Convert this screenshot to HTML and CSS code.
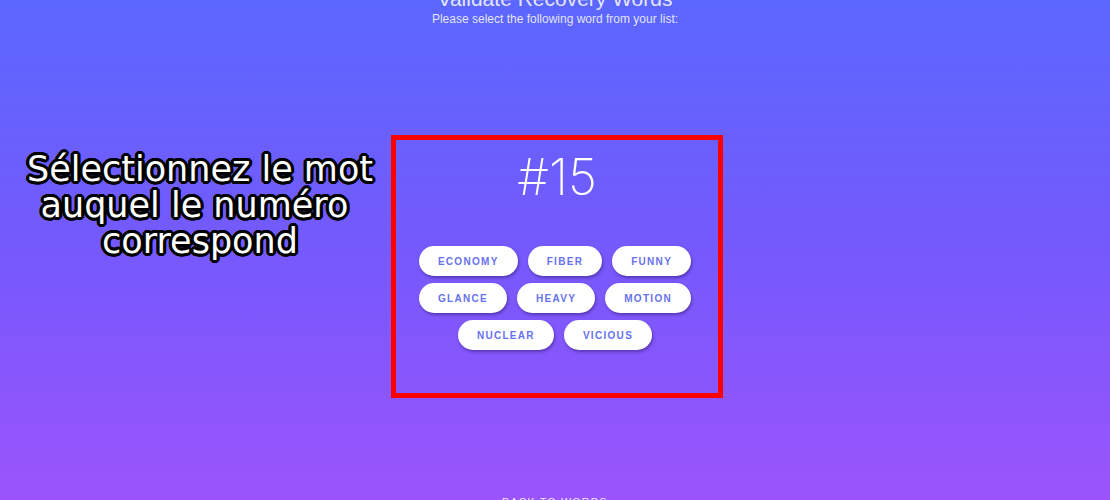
FILE: index.html
```html
<!DOCTYPE html>
<html lang="en">
<head>
<meta charset="utf-8">
<title>Validate Recovery Words</title>
<link rel="stylesheet" href="styles.css">
</head>
<body>
<div class="page">
  <header class="head">
    <h1 class="title">Validate Recovery Words</h1>
    <p class="subtitle">Please select the following word from your list:</p>
  </header>
  <main class="stage">
    <p class="caption">Sélectionnez le mot<br>auquel le numéro&nbsp;<br>correspond</p>
    <section class="card">
      <div class="number">#15</div>
      <div class="words">
        <button class="word">ECONOMY</button>
        <button class="word">FIBER</button>
        <button class="word">FUNNY</button>
        <button class="word">GLANCE</button>
        <button class="word">HEAVY</button>
        <button class="word">MOTION</button>
        <button class="word">NUCLEAR</button>
        <button class="word">VICIOUS</button>
      </div>
    </section>
  </main>
  <footer class="foot">
    <a class="back">BACK TO WORDS</a>
  </footer>
</div>
</body>
</html>
```
FILE: styles.css
```css
html, body {
  margin: 0;
  padding: 0;
}
body {
  width: 1110px;
  height: 500px;
  overflow: hidden;
  background: linear-gradient(180deg, #5b67fe 0%, #7559fd 50%, #9b54fb 100%);
  font-family: "Liberation Sans", Arial, sans-serif;
  color: #fff;
}
.page {
  position: relative;
  height: 500px;
  display: flex;
  flex-direction: column;
  align-items: center;
}
.head {
  display: flex;
  flex-direction: column;
  align-items: center;
  margin-top: -14px;
}
.title {
  margin: 0;
  font-family: "Liberation Sans", Arial, sans-serif;
  font-weight: 300;
  font-size: 21px;
  line-height: 26px;
  color: rgba(255,255,255,0.85);
}
.subtitle {
  margin: 0;
  font-size: 12px;
  line-height: 15px;
  color: rgba(255,255,255,0.85);
}
.stage {
  width: 100%;
  box-sizing: border-box;
  padding-left: 4px;
  display: flex;
  justify-content: center;
  margin-top: 108px;
}
.caption {
  position: absolute;
  left: 0;
  top: 151px;
  width: 400px;
  margin: 0;
  text-align: center;
  font-family: "DejaVu Sans", Verdana, sans-serif;
  font-size: 35px;
  line-height: 36px;
  color: #fff;
  text-shadow:
    -3px 0 0 #000, 3px 0 0 #000, 0 -3px 0 #000, 0 3px 0 #000,
    -2px -2px 0 #000, 2px -2px 0 #000, -2px 2px 0 #000, 2px 2px 0 #000,
    -3px -1px 0 #000, 3px -1px 0 #000, -3px 1px 0 #000, 3px 1px 0 #000,
    -1px -3px 0 #000, 1px -3px 0 #000, -1px 3px 0 #000, 1px 3px 0 #000;
}
.card {
  box-sizing: border-box;
  width: 332px;
  height: 263px;
  border: 5px solid #ff0000;
  display: flex;
  flex-direction: column;
  align-items: center;
  padding-top: 7px;
}
.number {
  font-family: Inter, "Liberation Sans", sans-serif;
  font-weight: 200;
  font-size: 50px;
  line-height: 60px;
  color: #fff;
}
.words {
  width: 284px;
  margin-top: 39px;
  margin-left: -4px;
  display: flex;
  flex-wrap: wrap;
  justify-content: center;
  gap: 7px 10px;
}
.word {
  height: 30px;
  padding: 0 19px;
  border: 0;
  border-radius: 15px;
  background: #fff;
  box-shadow: 1px 2px 3px rgba(40, 20, 90, 0.45);
  font-family: "Liberation Sans", Arial, sans-serif;
  font-weight: 700;
  font-size: 10px;
  letter-spacing: 1.3px;
  color: #6772f0;
}
.foot {
  position: absolute;
  bottom: -9px;
  left: 0;
  right: 0;
  display: flex;
  justify-content: center;
}
.back {
  font-size: 10.5px;
  letter-spacing: 1.3px;
  color: rgba(255,255,255,0.9);
  line-height: 14px;
}
```
